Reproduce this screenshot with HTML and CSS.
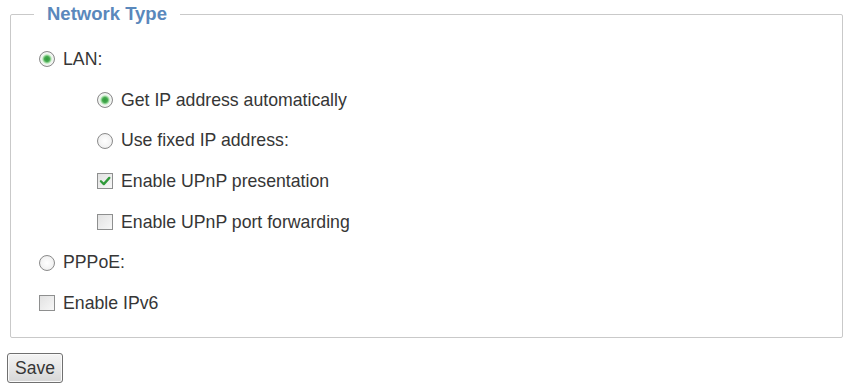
FILE: index.html
```html
<!DOCTYPE html>
<html>
<head>
<meta charset="utf-8">
<link rel="stylesheet" href="styles.css">
</head>
<body>
<fieldset class="group">
  <legend class="group-title">Network Type</legend>
  <div class="row">
    <span class="radio checked"></span><span class="label">LAN:</span>
  </div>
  <div class="row nested">
    <span class="radio checked"></span><span class="label">Get IP address automatically</span>
  </div>
  <div class="row nested">
    <span class="radio"></span><span class="label">Use fixed IP address:</span>
  </div>
  <div class="row nested">
    <span class="check"><svg viewBox="0 0 10 10" width="12" height="12"><path d="M1.6 5.2 L4 7.6 L8.6 2.4" fill="none" stroke="#2f9a3a" stroke-width="1.9" stroke-linecap="round" stroke-linejoin="round"/></svg></span><span class="label">Enable UPnP presentation</span>
  </div>
  <div class="row nested">
    <span class="check"></span><span class="label">Enable UPnP port forwarding</span>
  </div>
  <div class="row">
    <span class="radio"></span><span class="label">PPPoE:</span>
  </div>
  <div class="row">
    <span class="check"></span><span class="label">Enable IPv6</span>
  </div>
</fieldset>
<button class="save">Save</button>
</body>
</html>
```
FILE: styles.css
```css
html, body {
  margin: 0;
  padding: 0;
  background: #ffffff;
}
body {
  font-family: "Liberation Sans", Arial, sans-serif;
  font-size: 17.7px;
  color: #363636;
}
.group {
  margin: 0 5px 0 10px;
  padding: 11px 0 13px 0;
  border: 1px solid #c9c9c9;
  border-radius: 2px;
  min-width: 0;
}
.group-title {
  margin-left: 23px;
  padding: 0 13px;
  font-weight: bold;
  font-size: 18.5px;
  line-height: 28px;
  color: #5a88bc;
}
.row {
  display: flex;
  align-items: center;
  height: 40.7px;
  padding-left: 28px;
}
.row.nested {
  padding-left: 86px;
}
.label {
  margin-left: 8px;
}
.radio {
  width: 14px;
  height: 14px;
  border-radius: 50%;
  border: 1px solid #8b8b8b;
  background: radial-gradient(circle at 50% 50%, #ffffff 0, #f3f3f3 60%, #dcdcdc 100%);
  flex: none;
}
.radio.checked {
  background: radial-gradient(circle at 50% 50%, #2f9a3a 0, #45a94f 2.5px, #a9dfaa 4px, #eaf6ea 5px, #f4f4f4 6.5px, #dedede 7px);
}
.check {
  width: 14px;
  height: 14px;
  border: 1px solid #8e8f8f;
  background: linear-gradient(135deg, #e2e2e2 0%, #f7f7f7 100%);
  display: flex;
  align-items: center;
  justify-content: center;
  flex: none;
}
.check svg {
  display: block;
}
.save {
  margin: 15px 0 0 7px;
  font-family: "Liberation Sans", Arial, sans-serif;
  font-size: 17.5px;
  color: #363636;
  padding: 3px 7px 3px 7px;
  height: 30px;
  line-height: 22px;
  border: 1px solid #707070;
  border-radius: 3px;
  background: linear-gradient(#f4f4f4 0%, #e6e6e6 50%, #d6d6d6 100%);
  box-shadow: inset 0 0 0 1px #fafafa;
}
```
